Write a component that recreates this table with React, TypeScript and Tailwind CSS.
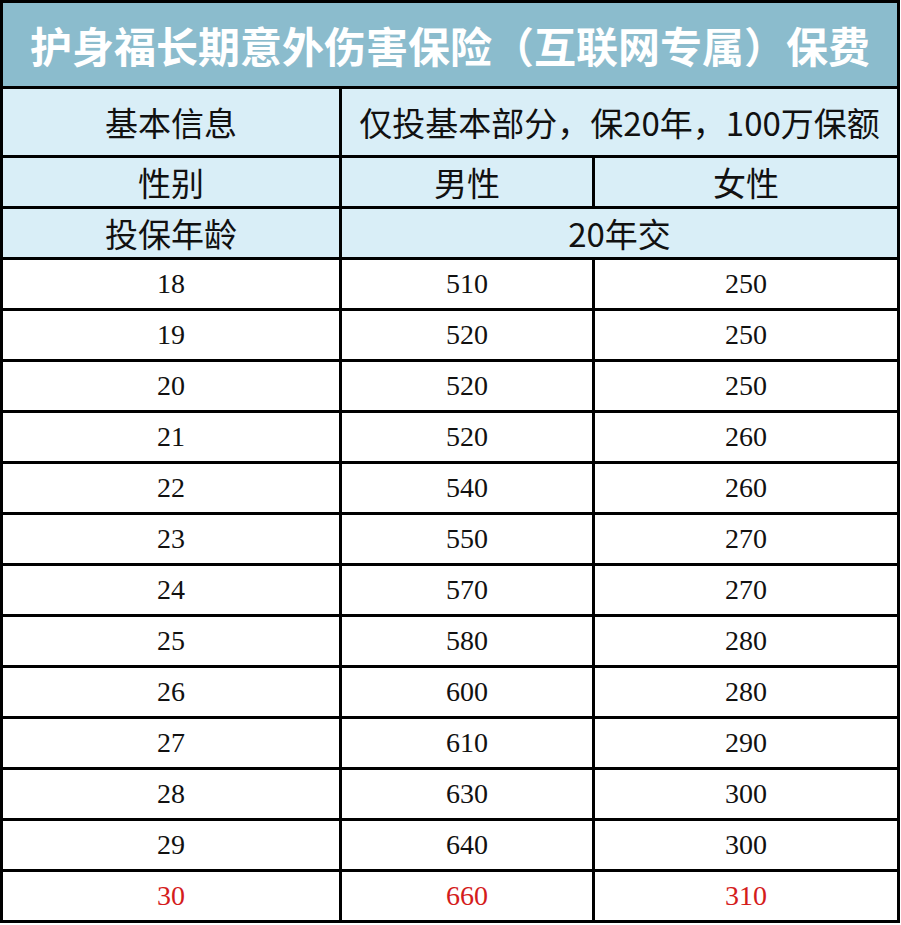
const rows: [number, number, number][] = [
  [18, 510, 250],
  [19, 520, 250],
  [20, 520, 250],
  [21, 520, 260],
  [22, 540, 260],
  [23, 550, 270],
  [24, 570, 270],
  [25, 580, 280],
  [26, 600, 280],
  [27, 610, 290],
  [28, 630, 300],
  [29, 640, 300],
  [30, 660, 310],
];

const sans = "font-[family-name:'Noto_Sans_CJK_SC','Noto_Sans',sans-serif]";
const serif = "font-[family-name:'Liberation_Serif','Times_New_Roman',serif]";

const head = `bg-[#d9eef7] flex items-center justify-center text-[33px] text-[#111] leading-none ${sans}`;

const App = () => {
  return (
    <div className="w-[901px] h-[925px] bg-white">
      <div className="w-[900px] grid grid-cols-[336px_250px_302px] grid-rows-[83px_66px_48px_48px_repeat(13,48px)] gap-[3px] p-[3px] bg-black">
        <div className={`col-span-3 bg-[#8bbccd] flex items-center justify-center text-white font-bold text-[42px] leading-none ${sans}`}>
          护身福长期意外伤害保险（互联网专属）保费
        </div>

        <div className={head}>基本信息</div>
        <div className={`${head} col-span-2`}>仅投基本部分，保20年，100万保额</div>

        <div className={head}>性别</div>
        <div className={head}>男性</div>
        <div className={head}>女性</div>

        <div className={head}>投保年龄</div>
        <div className={`${head} col-span-2`}>20年交</div>

        {rows.map(([age, male, female], i) => {
          const last = i === rows.length - 1;
          const cell = `bg-white flex items-center justify-center text-[28px] leading-none ${serif} ${
            last ? "text-[#d41c1c]" : "text-[#111]"
          }`;
          return [
            <div key={`a${age}`} className={cell}>{age}</div>,
            <div key={`m${age}`} className={cell}>{male}</div>,
            <div key={`f${age}`} className={cell}>{female}</div>,
          ];
        })}
      </div>
    </div>
  );
};

export default App;
